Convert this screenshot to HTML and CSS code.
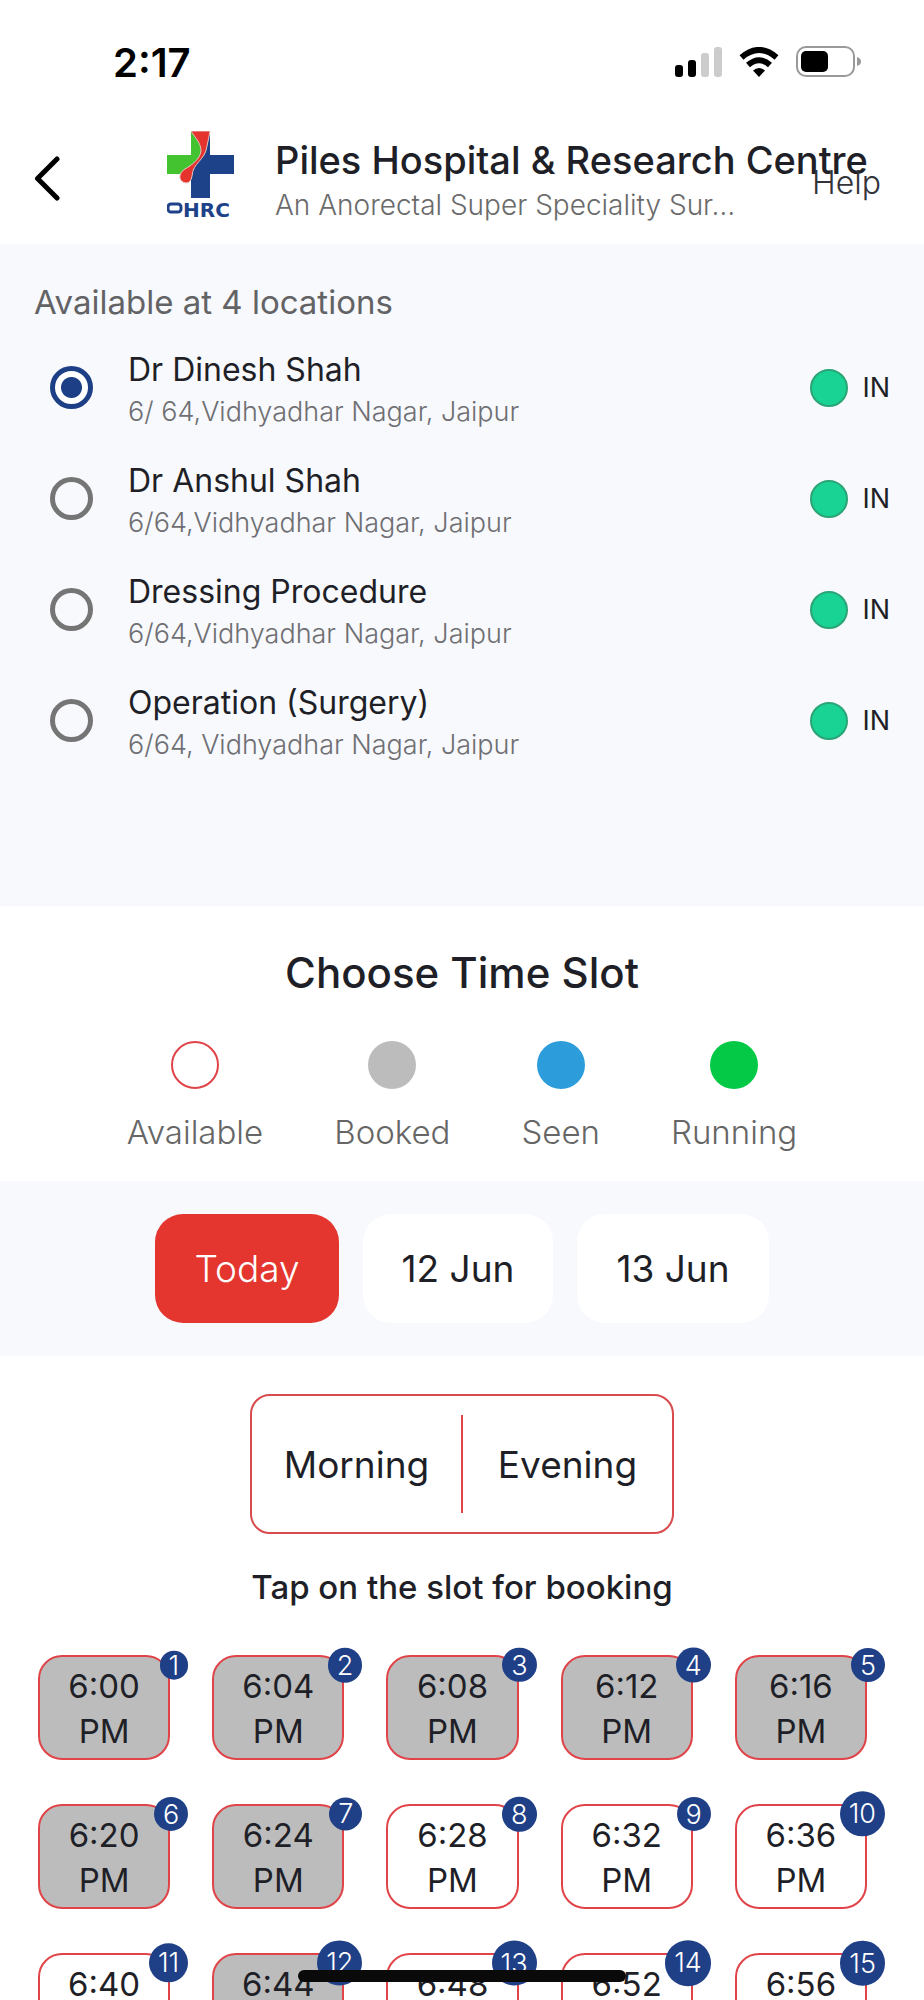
FILE: index.html
```html
<!DOCTYPE html>
<html lang="en">
<head>
<meta charset="utf-8">
<meta name="viewport" content="width=device-width, initial-scale=1">
<title>Piles Hospital &amp; Research Centre</title>
<link rel="stylesheet" href="styles.css">
</head>
<body>
<div class="screen">
  <div class="status-bar">
    <span class="clock">2:17</span>
    <div class="status-icons">
      <svg width="47" height="30" viewBox="0 0 47 30" aria-hidden="true">
        <rect x="0" y="18" width="8" height="12" rx="3"/>
        <rect x="13" y="13" width="8" height="17" rx="3"/>
        <rect x="26" y="6" width="8" height="24" rx="3" fill="#ccc"/>
        <rect x="39" y="0" width="8" height="30" rx="3" fill="#ccc"/>
      </svg>
      <svg width="40" height="30" viewBox="0 0 40 30" aria-hidden="true">
        <path d="M2.500 10.500Q20-4.500 37.500 10.500" fill="none" stroke="#000" stroke-width="6"/>
        <path d="M9 18Q20 8.500 31 18" fill="none" stroke="#000" stroke-width="6"/>
        <path d="M14 23.500Q20 18.500 26 23.500L20 30Z"/>
      </svg>
      <svg width="66" height="32" viewBox="0 0 66 32" aria-hidden="true">
        <rect x="1" y="1" width="57" height="29" rx="9" fill="#fff" stroke="#999" stroke-width="2"/>
        <rect x="5" y="5" width="27" height="21" rx="5"/>
        <path d="M61 11Q65 12 65 15.500T61 20Z" fill="#999"/>
      </svg>
    </div>
  </div>

  <header class="header">
    <button class="back" type="button" aria-label="Back">
      <svg width="26" height="45" viewBox="0 0 26 45" aria-hidden="true"><path d="M23 3 3.500 22.500 23 42" fill="none" stroke="#000" stroke-width="5" stroke-linecap="round" stroke-linejoin="round"/></svg>
    </button>
    <svg class="logo" width="68" height="94" viewBox="0 0 68 94" role="img" aria-label="PHRC">
      <path d="M24 0H43V24H67V43H43V67H24Z" fill="#1d4289"/>
      <path d="M0 24H24V0C29 8 34 12 34 20C33 28 25 34 18 38L13 43H0Z" fill="#43c32f"/>
      <path d="M24 0H43Q42 6 40 15C38 30 26 31 25 45Q24 52 19 52C11 51 11 42 18 38C25 34 33 28 34 20C34 12 29 8 24 0Z" fill="#e5342e" stroke="#e8c4c0" stroke-width="1"/>
      <rect x="1" y="73" width="13" height="8" rx="3" fill="none" stroke="#1d4289" stroke-width="3"/>
      <text class="logo-text" x="16" y="86">HRC</text>
    </svg>
    <div class="clinic">
      <h1 class="clinic-name">Piles Hospital &amp; Research Centre</h1>
      <p class="clinic-about">An Anorectal Super Speciality Sur…</p>
    </div>
    <a class="help" href="#help">Help</a>
  </header>

  <section class="locations">
    <h2 class="locations-title">Available at 4 locations</h2>
    <label class="location">
      <input class="radio" type="radio" name="location" checked>
      <span class="place"><span class="place-name">Dr Dinesh Shah</span><span class="place-address">6/ 64,Vidhyadhar Nagar, Jaipur</span></span>
      <span class="presence">IN</span>
    </label>
    <label class="location">
      <input class="radio" type="radio" name="location">
      <span class="place"><span class="place-name">Dr Anshul Shah</span><span class="place-address">6/64,Vidhyadhar Nagar, Jaipur</span></span>
      <span class="presence">IN</span>
    </label>
    <label class="location">
      <input class="radio" type="radio" name="location">
      <span class="place"><span class="place-name">Dressing Procedure</span><span class="place-address">6/64,Vidhyadhar Nagar, Jaipur</span></span>
      <span class="presence">IN</span>
    </label>
    <label class="location">
      <input class="radio" type="radio" name="location">
      <span class="place"><span class="place-name">Operation (Surgery)</span><span class="place-address">6/64, Vidhyadhar Nagar, Jaipur</span></span>
      <span class="presence">IN</span>
    </label>
  </section>

  <section class="chooser">
    <h2 class="chooser-title">Choose Time Slot</h2>
    <ul class="legend">
      <li class="legend-item"><span class="dot dot-available"></span>Available</li>
      <li class="legend-item"><span class="dot dot-booked"></span>Booked</li>
      <li class="legend-item"><span class="dot dot-seen"></span>Seen</li>
      <li class="legend-item"><span class="dot dot-running"></span>Running</li>
    </ul>
  </section>

  <nav class="dates" aria-label="Date">
    <button class="date date-active" type="button">Today</button>
    <button class="date" type="button">12 Jun</button>
    <button class="date" type="button">13 Jun</button>
  </nav>

  <main class="booking">
    <div class="session">
      <button class="session-button" type="button">Morning</button>
      <span class="session-divider"></span>
      <button class="session-button" type="button">Evening</button>
    </div>
    <p class="hint">Tap on the slot for booking</p>
    <div class="slots">
      <button class="slot booked" type="button">6:00<br>PM<span class="badge">1</span></button>
      <button class="slot booked" type="button">6:04<br>PM<span class="badge">2</span></button>
      <button class="slot booked" type="button">6:08<br>PM<span class="badge">3</span></button>
      <button class="slot booked" type="button">6:12<br>PM<span class="badge">4</span></button>
      <button class="slot booked" type="button">6:16<br>PM<span class="badge">5</span></button>
      <button class="slot booked" type="button">6:20<br>PM<span class="badge">6</span></button>
      <button class="slot booked" type="button">6:24<br>PM<span class="badge">7</span></button>
      <button class="slot" type="button">6:28<br>PM<span class="badge">8</span></button>
      <button class="slot" type="button">6:32<br>PM<span class="badge">9</span></button>
      <button class="slot" type="button">6:36<br>PM<span class="badge">10</span></button>
      <button class="slot" type="button">6:40<br>PM<span class="badge">11</span></button>
      <button class="slot booked" type="button">6:44<br>PM<span class="badge">12</span></button>
      <button class="slot" type="button">6:48<br>PM<span class="badge">13</span></button>
      <button class="slot" type="button">6:52<br>PM<span class="badge">14</span></button>
      <button class="slot" type="button">6:56<br>PM<span class="badge">15</span></button>
    </div>
  </main>
  <div class="home-indicator"></div>
</div>
</body>
</html>
```

FILE: styles.css
```css
*,
*::before {
  box-sizing: border-box;
}

body {
  margin: 0;
  background: #fff;
  color: #1f1f27;
  font-family: Inter, "Liberation Sans", sans-serif;
}

h1, h2, p, ul {
  margin: 0;
  padding: 0;
  font-weight: 400;
}

button {
  margin: 0;
  padding: 0;
  border: 0;
  background: none;
  color: inherit;
  font: inherit;
}

.screen {
  position: relative;
  height: 100vh;
  overflow: hidden;
}

/* Status bar */
.status-bar {
  display: flex;
  align-items: center;
  justify-content: space-between;
  height: 124px;
  padding: 0 62px 0 113px;
}

.clock {
  color: #000;
  font-size: 40px;
  font-weight: 600;
}

.status-icons {
  display: flex;
  align-items: center;
  gap: 17px;
}

/* Header */
.header {
  display: flex;
  align-items: center;
  height: 120px;
  padding: 0 43px 4px 34px;
}

.back,
.logo {
  display: block;
  flex: none;
  margin-bottom: 8px;
}

.back svg {
  display: block;
}

.logo {
  margin-right: 40px;
  margin-left: 107px;
}

.logo-text {
  fill: #1d4289;
  font: bold 20px "DejaVu Sans", sans-serif;
}

.clinic {
  flex: 1;
  min-width: 0;
  white-space: nowrap;
}

.clinic-name {
  font-size: 38px;
  font-weight: 500;
  line-height: 46px;
}

.clinic-about {
  color: #6b6b6b;
  font-size: 28px;
  font-weight: 300;
  line-height: 44px;
}

.help {
  color: #33333a;
  font-size: 32px;
  font-weight: 300;
  text-decoration: none;
}

/* Locations */
.locations {
  padding: 36px 34px 130px;
  background: #f7f9fd;
}

.locations-title {
  margin-bottom: 8px;
  color: #636366;
  font-size: 33px;
  line-height: 44px;
}

.location {
  display: flex;
  align-items: center;
  height: 111px;
  padding-left: 16px;
}

.radio {
  flex: none;
  width: 43px;
  height: 43px;
  margin: 0 35px 0 0;
  border: 5px solid #757575;
  border-radius: 50%;
  appearance: none;
}

.radio:checked {
  border-color: #1d3f86;
  background: radial-gradient(circle, #1d3f86 10px, #fff 11px);
}

.place {
  flex: 1;
  padding-top: 4px;
}

.place-name,
.place-address {
  display: block;
}

.place-name {
  font-size: 32px;
  line-height: 44px;
}

.place-address {
  color: #6f6f73;
  font-size: 27px;
  font-weight: 300;
  line-height: 40px;
}

.presence {
  display: flex;
  align-items: center;
  gap: 14px;
  font-size: 27px;
}

.presence::before {
  width: 38px;
  height: 38px;
  border: 2px solid #2ba476;
  border-radius: 50%;
  background: #18d394;
  content: "";
}

/* Legend */
.chooser {
  padding: 39px 34px 27px;
}

.chooser-title {
  margin-bottom: 40px;
  font-size: 42px;
  font-weight: 500;
  line-height: 56px;
  text-align: center;
}

.legend {
  display: flex;
  justify-content: center;
  gap: 71px;
  color: #666;
  font-size: 33px;
  font-weight: 300;
  line-height: 44px;
  list-style: none;
}

.legend-item {
  display: flex;
  flex-direction: column;
  align-items: center;
  gap: 21px;
}

.dot {
  width: 48px;
  height: 48px;
  border-radius: 50%;
}

.dot-available {
  border: 2px solid #e04448;
}

.dot-booked {
  background: #bcbcbc;
}

.dot-seen {
  background: #2d9cdb;
}

.dot-running {
  background: #04c946;
}

/* Dates */
.dates {
  display: flex;
  justify-content: center;
  gap: 24px;
  padding: 33px;
  background: #f7f9fd;
}

.date {
  height: 109px;
  padding: 0 39px;
  border-radius: 28px;
  background: #fff;
  font-size: 37px;
}

.date-active {
  background: #e4362f;
  color: #fff;
  font-weight: 300;
}

/* Session and slots */
.booking {
  padding-top: 38px;
}

.session {
  display: flex;
  align-items: center;
  width: 424px;
  height: 140px;
  margin: 0 auto;
  border: 2px solid #d94a4c;
  border-radius: 20px;
}

.session-button {
  flex: 1;
  height: 100%;
  font-size: 37px;
}

.session-divider {
  width: 2px;
  height: 98px;
  background: #e04448;
}

.hint {
  margin: 31px 0 46px;
  font-size: 33px;
  font-weight: 500;
  line-height: 44px;
  text-align: center;
}

.slots {
  display: grid;
  grid-template-columns: repeat(5, 1fr);
  gap: 44px 42px;
  padding: 0 57px 0 38px;
}

.slot {
  position: relative;
  height: 105px;
  padding-top: 2px;
  border: 2px solid #e04448;
  border-radius: 24px;
  font-size: 33px;
  line-height: 45px;
}

.booked {
  background: #bcbcbc;
}

.badge {
  position: absolute;
  top: 8px;
  right: -20px;
  display: flex;
  align-items: center;
  justify-content: center;
  padding: 0 9px;
  aspect-ratio: 1;
  border-radius: 50%;
  background: #1f3f87;
  color: #fff;
  font-size: 27px;
  font-weight: 300;
  line-height: 27px;
  transform: translateY(-50%);
}

.home-indicator {
  position: absolute;
  bottom: 18px;
  left: 50%;
  width: 328px;
  height: 12px;
  border-radius: 6px;
  background: #0a0a0a;
  transform: translateX(-50%);
}
```
